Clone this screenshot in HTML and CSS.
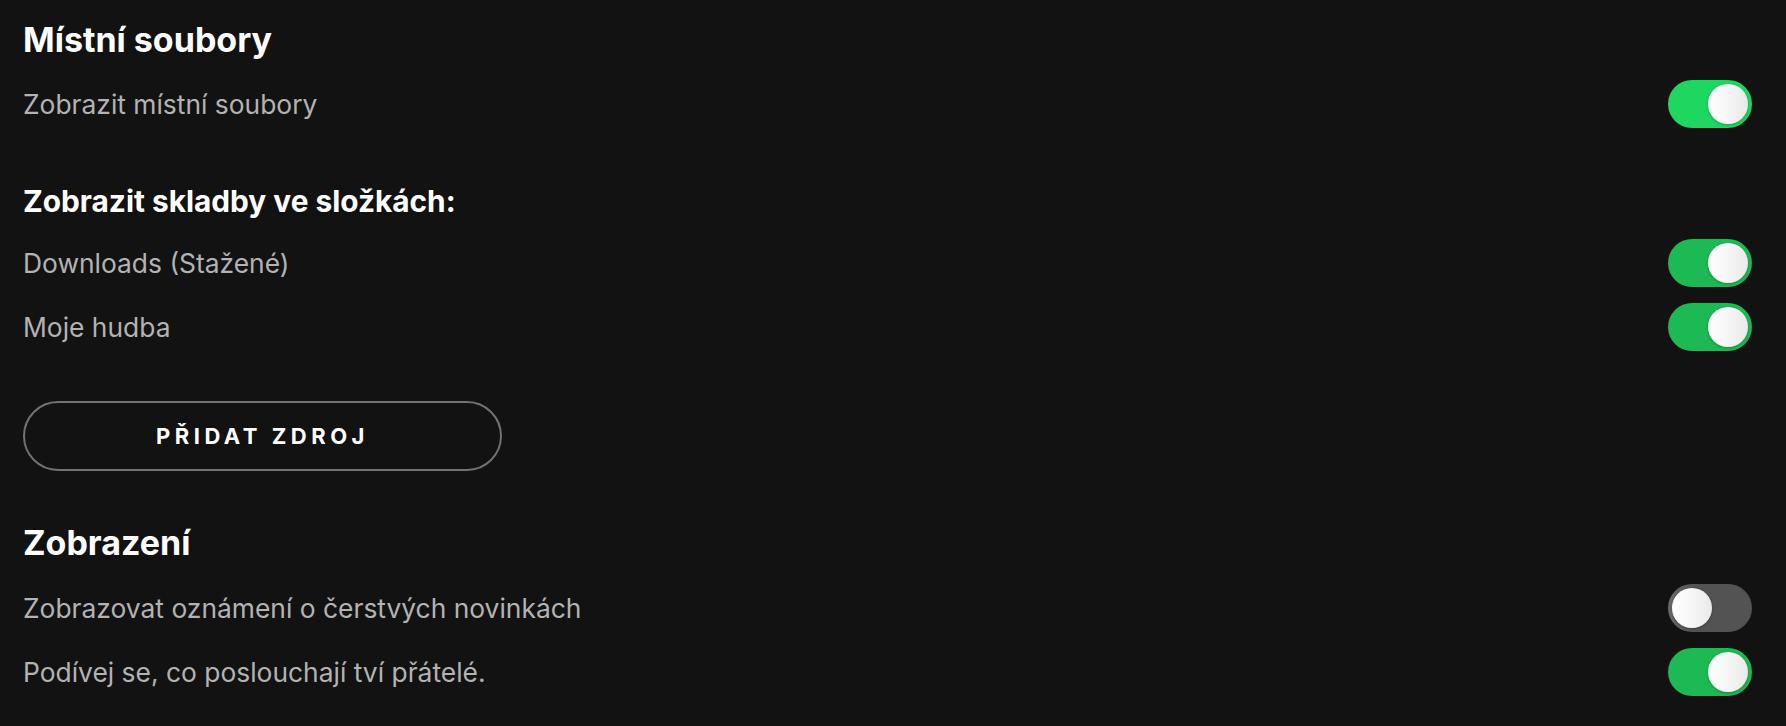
FILE: index.html
```html
<!DOCTYPE html>
<html lang="cs">
<head>
<meta charset="utf-8">
<title>Nastavení</title>
<link rel="stylesheet" href="styles.css">
</head>
<body>
<main class="page">
  <section class="group">
    <h2 class="title title-first">Místní soubory</h2>
    <div class="row">
      <span class="label">Zobrazit místní soubory</span>
      <span class="toggle on bright"><span class="knob"></span></span>
    </div>
    <h3 class="subtitle">Zobrazit skladby ve složkách:</h3>
    <div class="row">
      <span class="label">Downloads (Stažené)</span>
      <span class="toggle on"><span class="knob"></span></span>
    </div>
    <div class="row">
      <span class="label">Moje hudba</span>
      <span class="toggle on"><span class="knob"></span></span>
    </div>
    <button class="add-btn">PŘIDAT ZDROJ</button>
  </section>
  <section class="group">
    <h2 class="title title-second">Zobrazení</h2>
    <div class="row">
      <span class="label">Zobrazovat oznámení o čerstvých novinkách</span>
      <span class="toggle off"><span class="knob"></span></span>
    </div>
    <div class="row">
      <span class="label">Podívej se, co poslouchají tví přátelé.</span>
      <span class="toggle on"><span class="knob"></span></span>
    </div>
  </section>
</main>
</body>
</html>
```

FILE: styles.css
```css
* { box-sizing: border-box; }
html, body {
  margin: 0;
  background: #121212;
  height: 100%;
}
body {
  font-family: Inter, "Noto Sans", sans-serif;
  color: #b3b3b3;
}
.page {
  padding: 16px 34px 0 23px;
}
.title {
  margin: 0;
  font-size: 34px;
  line-height: 48px;
  font-weight: 700;
  color: #fff;
}
.title-first { margin-bottom: 8px; }
.title-second { margin-top: 48px; margin-bottom: 9px; }
.subtitle {
  margin: 45px 0 10px;
  font-size: 29.8px;
  line-height: 40px;
  font-weight: 700;
  color: #fff;
}
.row {
  height: 64px;
  display: flex;
  align-items: center;
  justify-content: space-between;
}
.label {
  font-size: 26.4px;
  color: #b3b3b3;
}
.toggle {
  width: 84px;
  height: 48px;
  border-radius: 24px;
  padding: 4px;
  display: flex;
  align-items: center;
  flex: none;
}
.toggle.on {
  background: #1db954;
  justify-content: flex-end;
}
.toggle.on.bright { background: #1ed760; }
.toggle.off {
  background: linear-gradient(90deg, #6a6a6a 0%, #535353 30%, #535353 100%);
  justify-content: flex-start;
}
.knob {
  width: 40px;
  height: 40px;
  border-radius: 50%;
  background: linear-gradient(90deg, #ffffff 0%, #f6f6f6 50%, #e9e9e9 100%);
  box-shadow: 0 1px 3px rgba(0,0,0,0.25);
}
.add-btn {
  display: block;
  margin-top: 42px;
  width: 479px;
  height: 70px;
  border: 2px solid #727272;
  border-radius: 35px;
  background: transparent;
  color: #fff;
  font-family: Inter, "Noto Sans", sans-serif;
  font-size: 22px;
  font-weight: 700;
  letter-spacing: 4.5px;
  padding: 0;
}
```
